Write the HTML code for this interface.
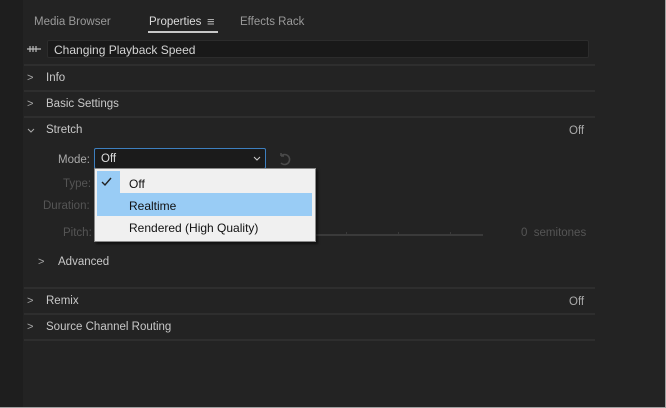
<!DOCTYPE html>
<html><head><meta charset="utf-8"><style>
*{margin:0;padding:0;box-sizing:border-box}
html,body{width:666px;height:408px;overflow:hidden;background:#232323}
body{position:relative;font-family:"Liberation Sans",sans-serif;font-size:11.5px;color:#c8c8c8}
.a{position:absolute;white-space:nowrap}
.t{margin-top:2px}
.frame{position:absolute;left:0;top:0;width:666px;height:408px;border-right:1px solid #a0a0a0;border-bottom:1px solid #a0a0a0}
.left{position:absolute;left:0;top:0;width:23px;height:408px;background:#1e1e1e}
.sep{position:absolute;left:24px;width:571px;height:2px;background:#2e2e2e}
.chev{position:absolute;color:#aaa;font-size:11px;margin-top:2px}
.dim{color:#555}
</style></head><body>
<div class="left"></div>
<div class="a t" style="left:34px;top:14px;color:#9a9a9a">Media Browser</div>
<div class="a t" style="left:149px;top:14px;color:#dcdcdc">Properties</div>
<div class="a t" style="left:207px;top:12px;color:#bbb;font-size:13px">≡</div>
<div class="a" style="left:148px;top:31px;width:70px;height:2px;background:#c8c8c8"></div>
<div class="a t" style="left:240px;top:14px;color:#9a9a9a">Effects Rack</div>
<svg class="a" style="left:26px;top:44px" width="16" height="10"><path d="M1 5H15M4 2V8M7 2V8M10 2V8" stroke="#bbb" stroke-width="1.2" fill="none"/></svg>
<div class="a" style="left:47px;top:40px;width:542px;height:18px;background:#191919;border:1px solid #2c2c2c;border-radius:2px"></div>
<div class="a t" style="left:54px;top:41px;color:#d4d4d4;font-size:12px">Changing Playback Speed</div>
<div class="sep" style="top:64px"></div>
<div class="chev" style="left:27px;top:70px">&gt;</div>
<div class="a t" style="left:46px;top:70px">Info</div>
<div class="sep" style="top:90px"></div>
<div class="chev" style="left:27px;top:96px">&gt;</div>
<div class="a t" style="left:46px;top:96px">Basic Settings</div>
<div class="sep" style="top:116px"></div>
<svg class="a" style="left:27px;top:128px" width="8" height="6"><path d="M1 1L4 4L7 1" stroke="#aaa" fill="none"/></svg>
<div class="a t" style="left:46px;top:122px">Stretch</div>
<div class="a t" style="left:569px;top:123px;color:#aaa">Off</div>
<div class="a t" style="left:58px;top:152px;color:#aaa">Mode:</div>
<div class="a t dim" style="left:63px;top:176px">Type:</div>
<div class="a t dim" style="left:43px;top:198px">Duration:</div>
<div class="a t dim" style="left:63px;top:225px">Pitch:</div>
<div class="a" style="left:94px;top:148px;width:172px;height:21px;background:#1b1b1b;border:1px solid #3d7fbf;border-radius:2px"></div>
<div class="a t" style="left:101px;top:151px;color:#ddd">Off</div>
<svg class="a" style="left:253px;top:156px" width="8" height="6"><path d="M1 1L4 4L7 1" stroke="#ccc" fill="none"/></svg>
<svg class="a" style="left:277px;top:152px" width="16" height="16"><path d="M4 4A5 5 0 1 1 4 11M4 4V1M4 4H7" stroke="#4a4a4a" stroke-width="1.6" fill="none"/></svg>
<div class="a" style="left:315px;top:234px;width:168px;height:2px;background:#3a3a3a"></div>
<div class="a" style="left:346px;top:232px;width:1px;height:2px;background:#3a3a3a"></div>
<div class="a" style="left:398px;top:232px;width:1px;height:2px;background:#3a3a3a"></div>
<div class="a" style="left:450px;top:232px;width:1px;height:2px;background:#3a3a3a"></div>
<div class="a t dim" style="left:521px;top:225px">0&nbsp; semitones</div>
<div class="a" style="left:94px;top:168px;width:222px;height:74px;background:#f0f0f0;border:1px solid #8a8a8a;box-shadow:2px 2px 2px rgba(0,0,0,.5)"></div>
<div class="a" style="left:97px;top:171px;width:23px;height:22px;background:#99ccf5"></div>
<div class="a" style="left:97px;top:193px;width:215px;height:23px;background:#99ccf5"></div>
<svg class="a" style="left:101px;top:177px" width="12" height="10"><path d="M1 5L4 8L10 1" stroke="#222" stroke-width="1.4" fill="none"/></svg>
<div class="a t" style="left:129px;top:175px;color:#111;font-size:12px">Off</div>
<div class="a t" style="left:129px;top:197px;color:#111;font-size:12px">Realtime</div>
<div class="a t" style="left:129px;top:219px;color:#111;font-size:12px">Rendered (High Quality)</div>
<div class="chev" style="left:38px;top:254px">&gt;</div>
<div class="a t" style="left:58px;top:254px">Advanced</div>
<div class="sep" style="top:287px"></div>
<div class="chev" style="left:27px;top:293px">&gt;</div>
<div class="a t" style="left:46px;top:293px">Remix</div>
<div class="a t" style="left:569px;top:294px;color:#aaa">Off</div>
<div class="sep" style="top:313px"></div>
<div class="chev" style="left:27px;top:319px">&gt;</div>
<div class="a t" style="left:46px;top:319px">Source Channel Routing</div>
<div class="sep" style="top:339px"></div>
<div class="frame"></div>
</body></html>
